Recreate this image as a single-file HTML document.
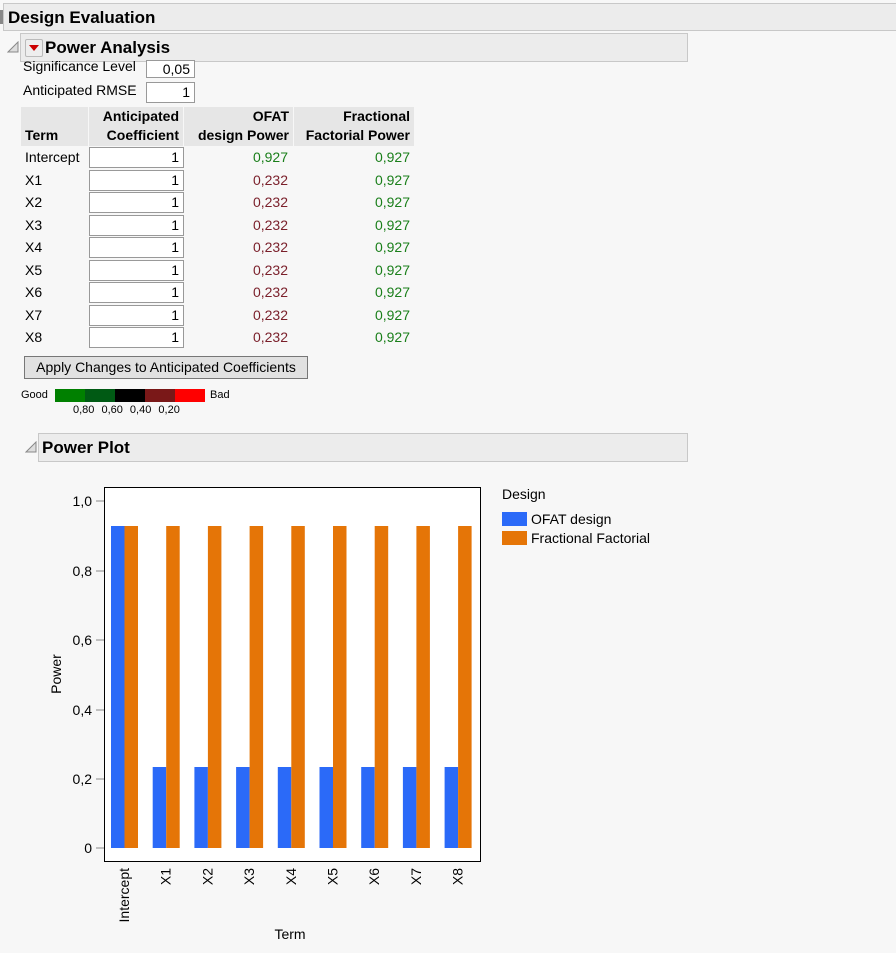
<!DOCTYPE html>
<html><head><meta charset="utf-8"><style>
body{margin:0;width:896px;height:953px;background:#f7f7f7;font-family:"Liberation Sans",sans-serif;font-size:14px;color:#000;position:relative;overflow:hidden}
.a{position:absolute;white-space:nowrap}
.hdr{position:absolute;background:#ececec;border:1px solid #c8c8c8;font-weight:bold}
.inp{position:absolute;background:#fff;border:1px solid #999;box-sizing:border-box;text-align:right;padding-right:4px;font-size:14px}
.th{position:absolute;background:#e6e6e6;font-weight:bold;text-align:right;line-height:19px;padding-right:4px;box-sizing:border-box}
.g{color:#1a7f1a}.r{color:#7a1f2a}
</style></head><body>
<div class="hdr" style="left:3px;top:3px;width:893px;height:26px;border-right:none"><span class="a" style="left:4px;top:4px;font-size:17px">Design Evaluation</span></div>
<div class="a" style="left:0;top:10px;width:3px;height:14px;background:#888"></div>
<svg class="a" style="left:7px;top:41px" width="12" height="12"><path d="M1 11 L11 1 L11 11 Z" fill="#ddd" stroke="#888"/></svg>
<div class="hdr" style="left:20px;top:33px;width:666px;height:27px"><span class="a" style="left:4px;top:5px;width:16px;height:16px;background:#eee;border:1px solid #bbb;border-radius:2px"></span><svg class="a" style="left:8px;top:11px" width="10" height="6"><path d="M0 0H10L5 6Z" fill="#c00"/></svg><span class="a" style="left:24px;top:4px;font-size:17px">Power Analysis</span></div>
<div class="a" style="left:23px;top:58px">Significance Level</div>
<div class="inp" style="left:146px;top:60px;width:49px;height:18px;line-height:16px">0,05</div>
<div class="a" style="left:23px;top:82px">Anticipated RMSE</div>
<div class="inp" style="left:146px;top:82px;width:49px;height:21px;line-height:19px">1</div>
<div class="th" style="left:21px;top:107px;width:67px;height:39px;text-align:left;padding-left:4px;line-height:57px">Term</div>
<div class="th" style="left:89px;top:107px;width:94px;height:39px">Anticipated<br>Coefficient</div>
<div class="th" style="left:184px;top:107px;width:109px;height:39px">OFAT<br>design Power</div>
<div class="th" style="left:294px;top:107px;width:120px;height:39px">Fractional<br>Factorial Power</div>
<div id="rows"></div>
<div class="a" style="left:24px;top:356px;width:284px;height:23px;background:#e1e1e1;border:1px solid #777;box-sizing:border-box;text-align:center;line-height:21px">Apply Changes to Anticipated Coefficients</div>
<div class="a" style="left:21px;top:389px;font-size:11px">Good</div>
<div class="a" style="left:55px;top:389px;width:30px;height:13px;background:#008000"></div>
<div class="a" style="left:85px;top:389px;width:30px;height:13px;background:#005a14"></div>
<div class="a" style="left:115px;top:389px;width:30px;height:13px;background:#000"></div>
<div class="a" style="left:145px;top:389px;width:30px;height:13px;background:#7a1818"></div>
<div class="a" style="left:175px;top:389px;width:30px;height:13px;background:#ff0000"></div>
<div class="a" style="left:210px;top:389px;font-size:11px">Bad</div>
<div class="a" style="left:73px;top:404px;font-size:11px;word-spacing:4px">0,80 0,60 0,40 0,20</div>
<svg class="a" style="left:25px;top:441px" width="12" height="12"><path d="M1 11 L11 1 L11 11 Z" fill="#ddd" stroke="#888"/></svg>
<div class="hdr" style="left:38px;top:433px;width:648px;height:27px"><span class="a" style="left:3px;top:4px;font-size:17px">Power Plot</span></div>
<svg class="a" style="left:0;top:0" width="896" height="953" font-family="Liberation Sans" font-size="14">
<rect x="104.5" y="487.5" width="376" height="374" fill="#fff" stroke="#000"/>
<g id="bars"></g>
<g fill="#000" text-anchor="end">
<text x="92" y="506">1,0</text><text x="92" y="576">0,8</text><text x="92" y="645">0,6</text><text x="92" y="715">0,4</text><text x="92" y="784">0,2</text><text x="92" y="853">0</text>
</g>
<g stroke="#888"><line x1="96" y1="501" x2="104" y2="501"/><line x1="96" y1="571" x2="104" y2="571"/><line x1="96" y1="640" x2="104" y2="640"/><line x1="96" y1="710" x2="104" y2="710"/><line x1="96" y1="779" x2="104" y2="779"/><line x1="96" y1="848" x2="104" y2="848"/></g>
<text transform="translate(61,674) rotate(-90)" text-anchor="middle">Power</text>
<text x="290" y="939" text-anchor="middle">Term</text>
<g id="xl"></g>
<text x="502" y="499">Design</text>
<rect x="502" y="512" width="25" height="14" fill="#2b6af8"/><text x="531" y="524">OFAT design</text>
<rect x="502" y="531" width="25" height="14" fill="#e57507"/><text x="531" y="543">Fractional Factorial</text>
</svg>
<script>
var t=["Intercept","X1","X2","X3","X4","X5","X6","X7","X8"],h="",b="",x="";
for(var i=0;i<9;i++){var y=147+i*22.5;
h+='<div class="a" style="left:25px;top:'+(y+2)+'px">'+t[i]+'</div><div class="inp" style="left:89px;top:'+y+'px;width:95px;height:21px;line-height:19px">1</div><div class="a '+(i?'r':'g')+'" style="left:184px;width:104px;text-align:right;top:'+(y+2)+'px">'+(i?'0,232':'0,927')+'</div><div class="a g" style="left:294px;width:116px;text-align:right;top:'+(y+2)+'px">0,927</div>';
var bx=111+i*41.7,bt=i?767:526;
b+='<rect x="'+bx+'" y="'+bt+'" width="13.5" height="'+(848-bt)+'" fill="#2b6af8"/><rect x="'+(bx+13.5)+'" y="526" width="13.5" height="322" fill="#e57507"/>';
x+='<text transform="translate('+(bx+18)+',868) rotate(-90)" text-anchor="end">'+t[i]+'</text>';}
document.getElementById("rows").innerHTML=h;
document.getElementById("bars").innerHTML=b;
document.getElementById("xl").innerHTML=x;
</script>
</body></html>
